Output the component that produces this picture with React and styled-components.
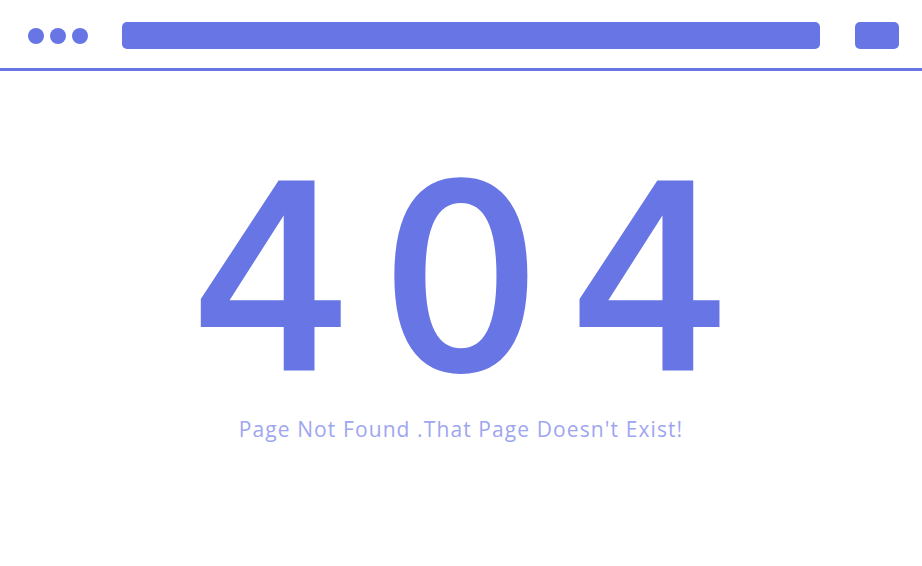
import React from 'react';
import styled, { createGlobalStyle } from 'styled-components';

const accent = '#6875e5';

const GlobalStyle = createGlobalStyle`
  html, body {
    margin: 0;
    padding: 0;
    background: #ffffff;
    font-family: "Open Sans", "Lato", sans-serif;
  }
`;

const Page = styled.div`
  width: 922px;
  height: 566px;
  display: flex;
  flex-direction: column;
  background: #fff;
  overflow: hidden;
`;

const Toolbar = styled.header`
  height: 71px;
  box-sizing: border-box;
  padding: 22px 23px 19px 28px;
  display: flex;
  align-items: center;
  border-bottom: 3px solid ${accent};
`;

const Dots = styled.div`
  display: flex;
  gap: 6px;
  margin-right: 34px;
`;

const Dot = styled.span`
  width: 16px;
  height: 16px;
  border-radius: 50%;
  background: ${accent};
`;

const AddressBar = styled.div`
  flex: 1;
  height: 27px;
  border-radius: 5px;
  background: ${accent};
`;

const MenuButton = styled.div`
  width: 44px;
  height: 27px;
  margin-left: 35px;
  border-radius: 5px;
  background: ${accent};
`;

const Content = styled.main`
  flex: 1;
  display: flex;
  flex-direction: column;
  align-items: center;
  padding-top: 83px;
`;

const Code = styled.h1`
  margin: 0 -29px 0 0;
  font-family: "DejaVu Sans", sans-serif;
  font-weight: 400;
  font-size: 252px;
  line-height: 1;
  color: ${accent};
  -webkit-text-stroke: 6px ${accent};
  letter-spacing: 29px;
`;

const Message = styled.p`
  margin: 9px 0 0;
  font-family: "Open Sans", sans-serif;
  font-size: 21px;
  color: #9ea6ef;
  letter-spacing: 1.1px;
`;

export default function App() {
  return (
    <>
      <GlobalStyle />
      <Page>
        <Toolbar>
          <Dots>
            <Dot />
            <Dot />
            <Dot />
          </Dots>
          <AddressBar />
          <MenuButton />
        </Toolbar>
        <Content>
          <Code>404</Code>
          <Message>Page Not Found .That Page Doesn't Exist!</Message>
        </Content>
      </Page>
    </>
  );
}
